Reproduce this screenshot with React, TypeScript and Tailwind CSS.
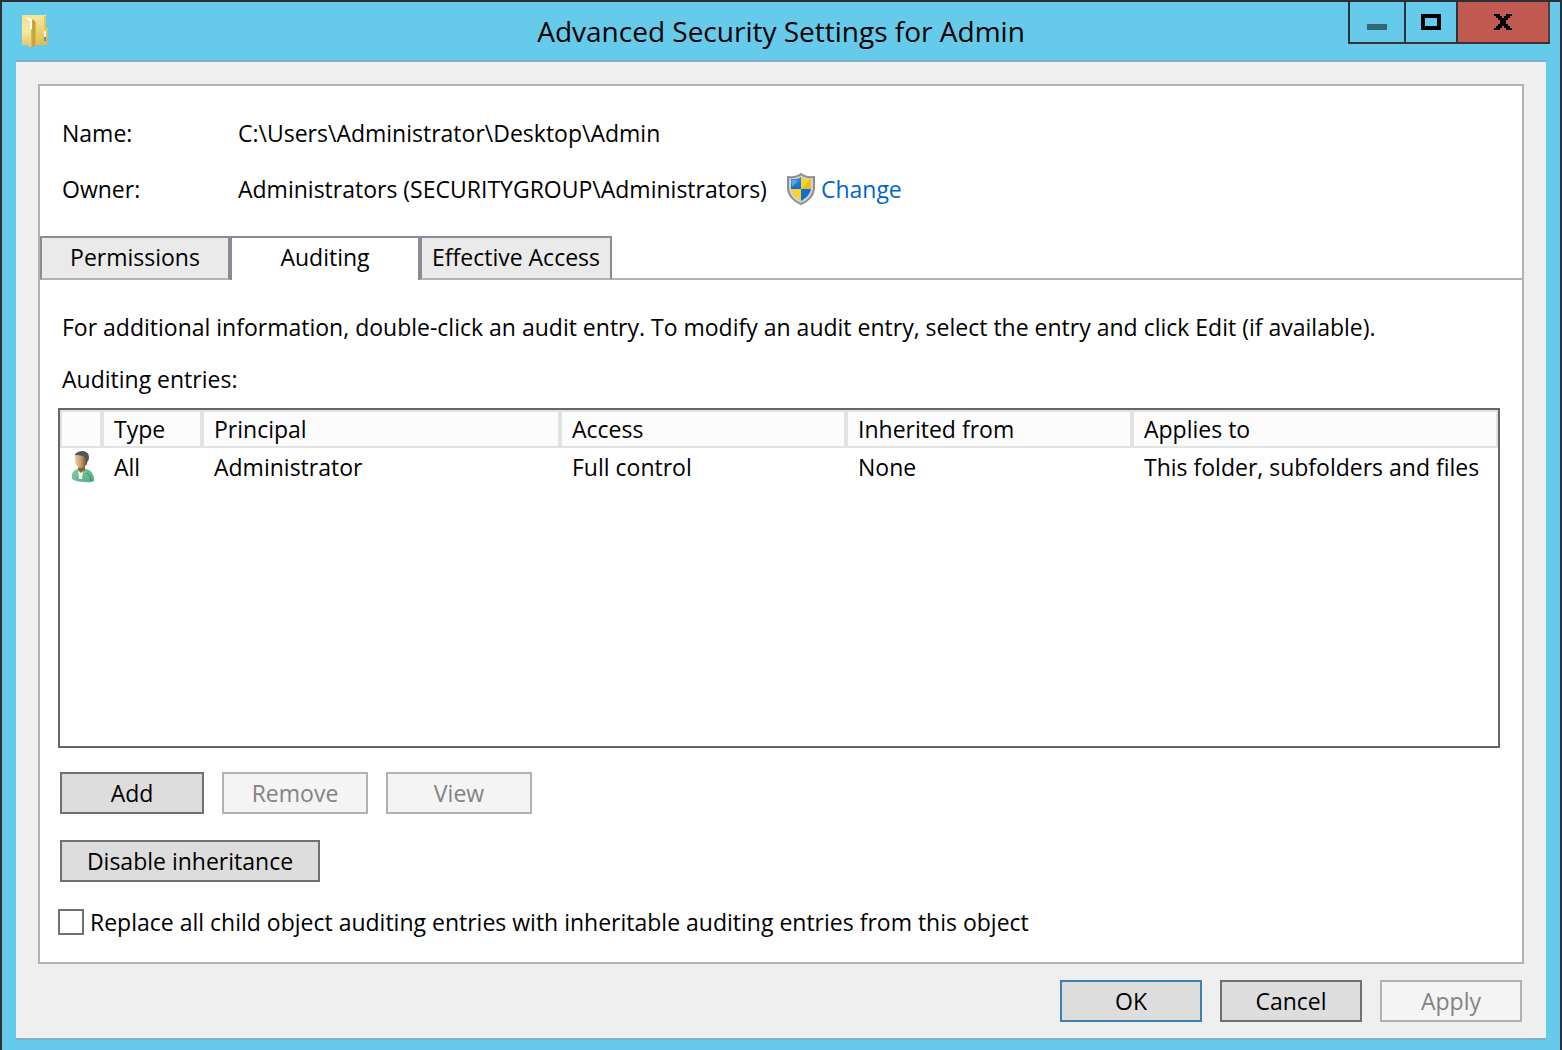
import React from "react";

const columns = [
    { title: "", width: "w-[42px]" },
    { title: "Type", width: "w-[100px]" },
    { title: "Principal", width: "w-[358px]" },
    { title: "Access", width: "w-[286px]" },
    { title: "Inherited from", width: "w-[286px]" },
    { title: "Applies to", width: "" },
];

const entries = [
    ["All", "Administrator", "Full control", "None", "This folder, subfolders and files"],
];

const FolderIcon = () => (
    <svg className="h-8 w-[26px]" viewBox="0 0 26 32" aria-hidden="true">
        <defs>
            <linearGradient id="folderFront" x1="0" y1="0" x2="0" y2="1">
                <stop offset="0" stopColor="#f3e38c" />
                <stop offset="0.5" stopColor="#f6e9a0" />
                <stop offset="1" stopColor="#e3c766" />
            </linearGradient>
            <linearGradient id="folderBack" x1="0" y1="0" x2="0" y2="1">
                <stop offset="0" stopColor="#f6eb9e" />
                <stop offset="1" stopColor="#dfb845" />
            </linearGradient>
            <linearGradient id="folderFold" x1="0" y1="0" x2="1" y2="0">
                <stop offset="0" stopColor="#e3c45a" />
                <stop offset="0.5" stopColor="#bf9a3c" />
                <stop offset="1" stopColor="#ddbd55" />
            </linearGradient>
        </defs>
        <path d="M0 0H24V12L26 14V28L24 30H14L12 32H8L5 30H0Z" fill="url(#folderBack)" />
        <path d="M0 0H22V2H4L10 6V32H8L5 30H0Z" fill="url(#folderFront)" />
        <path d="M9 3L14 7V29L12 32H9Z" fill="url(#folderFold)" />
        <path d="M4 2L10 4V14H8V6L5 4Z" fill="#fffef2" />
        <path d="M23 1V13L25 15V28" fill="none" stroke="#d0a93e" strokeWidth="1" />
        <rect x="22" y="16" width="2" height="6" fill="#f2f2f2" />
        <rect x="22" y="22" width="2" height="4" fill="#3f9fd0" />
    </svg>
);

const ShieldIcon = () => (
    <svg className="h-8 w-7" viewBox="0 0 28 32" aria-hidden="true">
        <defs>
            <clipPath id="shieldInner">
                <path d="M14 4Q18 7 24 6V16Q23 23 14 28Q5 23 4 16V6Q10 7 14 4Z" />
            </clipPath>
            <linearGradient id="shieldBlue" x1="0" y1="0" x2="0" y2="1">
                <stop offset="0" stopColor="#3b9ae6" />
                <stop offset="1" stopColor="#0b6ccb" />
            </linearGradient>
        </defs>
        <path
            d="M14 1Q19 5 27 4V16Q26 26 14 31Q2 26 1 16V4Q9 5 14 1Z"
            fill="#d2d2d2"
            stroke="#8e8e8e"
            strokeWidth="2"
        />
        <g clipPath="url(#shieldInner)">
            <rect x="0" y="0" width="14" height="16" fill="url(#shieldBlue)" />
            <rect x="14" y="0" width="14" height="16" fill="#f8d22e" />
            <rect x="0" y="16" width="14" height="16" fill="#f8d22e" />
            <rect x="14" y="16" width="14" height="16" fill="#0f6fcd" />
            <path d="M14 16L24 6V16Z" fill="#e0b020" opacity="0.6" />
            <path d="M4 8Q7 6 11 8L5 14Z" fill="#7cc0f2" opacity="0.6" />
        </g>
    </svg>
);

const UserIcon = () => (
    <svg className="h-8 w-6" viewBox="0 0 24 32" aria-hidden="true">
        <defs>
            <linearGradient id="userFace" x1="0" y1="0" x2="1" y2="0">
                <stop offset="0" stopColor="#ecd0ac" />
                <stop offset="0.5" stopColor="#c69a6c" />
                <stop offset="1" stopColor="#7a4a22" />
            </linearGradient>
            <linearGradient id="userShirt" x1="0" y1="0" x2="1" y2="1">
                <stop offset="0" stopColor="#8accaa" />
                <stop offset="1" stopColor="#55a582" />
            </linearGradient>
        </defs>
        <path d="M1 28Q0 20 6 18L10 17L16 18Q23 20 23 30Q20 32 14 31Q5 31 1 28Z" fill="url(#userShirt)" />
        <path d="M8 14H14V19L10 22L7 18Z" fill="#8f5f35" />
        <path d="M7 20L10 22L12 20L11 28H8Z" fill="#e9f6f0" />
        <path d="M4 4Q9 1 16 5V13Q13 17 9 17Q4 15 4 9Z" fill="url(#userFace)" />
        <path d="M4 3Q7 0 12 0Q18 1 18 6Q18 10 15 12Q15 7 12 5Q8 4 4 4Z" fill="#50565a" />
        <path d="M16 22Q20 24 20 30" fill="none" stroke="#3f8f6b" strokeWidth="1" />
    </svg>
);

const CaptionButtons = () => (
    <div className="flex h-[42px] justify-self-end self-start mr-[10px] border-b-2 border-[#3a3236]">
        <button className="w-14 border-l-2 border-[#2e3338] flex justify-center items-center" aria-label="Minimize">
            <svg className="h-4 w-5" viewBox="0 0 20 16" shapeRendering="crispEdges">
                <rect x="0" y="10" width="20" height="6" fill="#336676" />
            </svg>
        </button>
        <button className="w-[54px] border-x-2 border-[#2e3338] flex justify-center items-center" aria-label="Maximize">
            <svg className="h-4 w-5" viewBox="0 0 20 16" shapeRendering="crispEdges">
                <rect x="2" y="2" width="16" height="12" fill="none" stroke="#000" strokeWidth="4" />
            </svg>
        </button>
        <button className="w-[92px] bg-[#c15a50] border-r-2 border-[#5a3a3a] flex justify-center items-center" aria-label="Close">
            <svg className="h-4 w-[18px]" viewBox="0 0 9 8" shapeRendering="crispEdges">
                <path d="M0 0h3v1h-3zM6 0h3v1h-3zM1 1h3v1h-3zM5 1h3v1h-3zM2 2h5v1h-5zM3 3h3v2h-3zM2 5h5v1h-5zM1 6h3v1h-3zM5 6h3v1h-3zM0 7h3v1h-3zM6 7h3v1h-3z" />
            </svg>
        </button>
    </div>
);

const enabledButton = "h-[42px] border-2 border-[#707070] bg-[#dddddd] flex justify-center items-center";
const disabledButton = "h-[42px] border-2 border-[#adb2b5] bg-[#f4f4f4] text-[#838383] flex justify-center items-center";

export default function App() {
    return (
        <div className="min-h-screen flex flex-col bg-[#66caea] border-2 border-b-0 border-[#2e2f36] px-[14px] pb-[10px] font-['Open_Sans','Noto_Sans',sans-serif] text-[23px] leading-8 text-black">
            <header className="-mx-[14px] h-[58px] grid grid-cols-[1fr_auto_1fr] items-center">
                <div className="pl-5">
                    <FolderIcon />
                </div>
                <h1 className="text-[28px] leading-9">Advanced Security Settings for Admin</h1>
                <CaptionButtons />
            </header>

            <main className="flex-1 flex flex-col bg-[#efefef] border-y-2 border-[#7fb0c8] px-[22px] pt-[22px] pb-4">
                <section className="flex-1 flex flex-col bg-white border-2 border-[#b2b2b2]">
                    <dl className="grid grid-cols-[176px_1fr] gap-y-6 px-[22px] pt-[31px] pb-[31px]">
                        <dt>Name:</dt>
                        <dd>C:\Users\Administrator\Desktop\Admin</dd>
                        <dt>Owner:</dt>
                        <dd className="flex items-center">
                            <span>Administrators (SECURITYGROUP\Administrators)</span>
                            <a href="#" className="ml-5 flex items-center gap-[6px] text-[#0066cc]">
                                <ShieldIcon />
                                Change
                            </a>
                        </dd>
                    </dl>

                    <div className="flex h-11" role="tablist">
                        <button role="tab" aria-selected="false" className="w-[190px] pb-[2px] bg-[#eaeaea] border-2 border-[#898b97] border-b-[#b2b2b2]">Permissions</button>
                        <button role="tab" aria-selected="true" className="w-[190px] pb-1 bg-white border-2 border-b-0 border-[#898b97]">Auditing</button>
                        <button role="tab" aria-selected="false" className="w-[192px] pb-[2px] bg-[#eaeaea] border-2 border-[#898b97] border-b-[#b2b2b2]">Effective Access</button>
                        <div className="flex-1 border-b-2 border-[#b2b2b2]"></div>
                    </div>

                    <div className="flex-1 flex flex-col px-[22px] pt-[31px] pb-[26px]">
                        <p>For additional information, double-click an audit entry. To modify an audit entry, select the entry and click Edit (if available).</p>
                        <h2 className="mt-5" id="entries-label">Auditing entries:</h2>

                        <div className="-ml-1 mt-[13px] flex-1 border-2 border-[#666666]">
                            <table className="w-full table-fixed border-separate border-spacing-0" aria-labelledby="entries-label">
                                <thead>
                                    <tr className="h-[38px]">
                                        {columns.map((column) => (
                                            <th key={column.title} className={`${column.width} p-0 pl-[10px] text-left font-normal bg-[#fcfcfc] border-2 border-[#e2e2e2]`}>
                                                {column.title}
                                            </th>
                                        ))}
                                    </tr>
                                </thead>
                                <tbody>
                                    {entries.map((entry) => (
                                        <tr key={entry[1]} className="h-[38px]">
                                            <td className="p-0 pl-[11px]">
                                                <UserIcon />
                                            </td>
                                            {entry.map((value) => (
                                                <td key={value} className="p-0 pl-3 whitespace-nowrap">{value}</td>
                                            ))}
                                        </tr>
                                    ))}
                                </tbody>
                            </table>
                        </div>

                        <div className="-ml-[2px] mt-6 flex gap-[18px]">
                            <button className={`${enabledButton} w-36`}>Add</button>
                            <button className={`${disabledButton} w-[146px]`} disabled>Remove</button>
                            <button className={`${disabledButton} w-[146px]`} disabled>View</button>
                        </div>
                        <div className="-ml-[2px] mt-[26px] flex">
                            <button className={`${enabledButton} w-[260px]`}>Disable inheritance</button>
                        </div>
                        <label className="-ml-1 mt-[26px] h-7 flex items-center gap-[6px]">
                            <input type="checkbox" className="appearance-none size-[26px] shrink-0 border-2 border-[#707070] bg-white checked:bg-[#707070]" />
                            Replace all child object auditing entries with inheritable auditing entries from this object
                        </label>
                    </div>
                </section>

                <footer className="mt-4 pr-[2px] flex justify-end gap-[18px]">
                    <button className="h-[42px] w-[142px] border-2 border-[#3c7fb1] bg-[#dddddd] flex justify-center items-center">OK</button>
                    <button className={`${enabledButton} w-[142px]`}>Cancel</button>
                    <button className={`${disabledButton} w-[142px]`} disabled>Apply</button>
                </footer>
            </main>
        </div>
    );
}
